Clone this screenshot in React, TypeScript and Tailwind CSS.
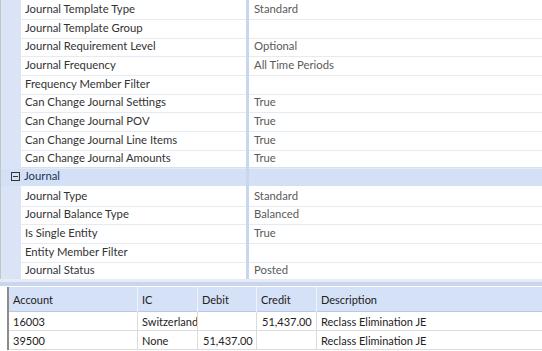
const props: { label: string; value?: string }[] = [
  { label: 'Journal Template Type', value: 'Standard' },
  { label: 'Journal Template Group' },
  { label: 'Journal Requirement Level', value: 'Optional' },
  { label: 'Journal Frequency', value: 'All Time Periods' },
  { label: 'Frequency Member Filter' },
  { label: 'Can Change Journal Settings', value: 'True' },
  { label: 'Can Change Journal POV', value: 'True' },
  { label: 'Can Change Journal Line Items', value: 'True' },
  { label: 'Can Change Journal Amounts', value: 'True' },
];

const journalProps: { label: string; value?: string }[] = [
  { label: 'Journal Type', value: 'Standard' },
  { label: 'Journal Balance Type', value: 'Balanced' },
  { label: 'Is Single Entity', value: 'True' },
  { label: 'Entity Member Filter' },
  { label: 'Journal Status', value: 'Posted' },
];

const lines = [
  { account: '16003', ic: 'SwitzerlandElim', debit: '', credit: '51,437.00', desc: 'Reclass Elimination JE' },
  { account: '39500', ic: 'None', debit: '51,437.00', credit: '', desc: 'Reclass Elimination JE' },
];

function PropRow({ label, value }: { label: string; value?: string }) {
    return (
        <div className="grid grid-cols-[20px_225px_3px_1fr] h-[18.67px]">
            <div className="bg-[#dae4f6]" />
            <div className="border-b border-[#e6ebf2] pl-[4px] text-[#333] leading-[20px] whitespace-nowrap">{label}</div>
            <div className="bg-[#c8d6f0]" />
            <div className="border-b border-[#e6ebf2] pl-[5px] text-[#5a5a5a] leading-[20px] whitespace-nowrap">{value}</div>
        </div>
    );
}

export default function App() {
    return (
        <div
            className="w-[542px] h-[351px] overflow-hidden bg-white text-[11.3px]"
            style={{ fontFamily: 'Lato, "Open Sans", sans-serif' }}
        >
            <div className="-mt-[1px] border-l border-[#c4c4c4]">
                {props.map(p => (
                    <PropRow key={p.label} {...p} />
                ))}
                <div className="grid grid-cols-[245px_3px_1fr] h-[18.67px] bg-[#d3e0f6]">
                    <div className="flex items-center gap-[4px] pl-[10px] pt-[1px] text-[#1d3557]">
                        <span className="w-[9px] h-[9px] border border-[#333] flex items-center justify-center">
                            <span className="w-[5px] h-[1px] bg-[#333]" />
                        </span>
                        Journal
                    </div>
                    <div className="bg-[#c8d6f0]" />
                    <div />
                </div>
                {journalProps.map(p => (
                    <PropRow key={p.label} {...p} />
                ))}
            </div>

            <div className="h-[8px] flex flex-col">
                <div className="h-[3px] bg-[#e6ebf4]" />
                <div className="h-[4px] bg-[#c9d6ee]" />
                <div className="h-[1px] bg-white" />
            </div>

            <div className="ml-[7px] border-l-2 border-[#8c8c8c] text-[#222] text-[11px]">
                <div className="grid grid-cols-[128px_60px_59px_60px_1fr] h-[25px] bg-[#d5e1f6] border-b border-[#b9c8e4]">
                    {['Account', 'IC', 'Debit', 'Credit', 'Description'].map((h, i) => (
                        <div
                            key={h}
                            className={`leading-[25px] pl-[4px] ${i > 0 ? 'border-l border-[#eef2fa]' : ''}`}
                        >
                            {h}
                        </div>
                    ))}
                </div>
                {lines.map(l => (
                    <div
                        key={l.account}
                        className="grid grid-cols-[128px_60px_59px_60px_1fr] h-[19px] border-b border-[#dcdcdc]"
                    >
                        <div className="leading-[19px] pl-[4px] whitespace-nowrap overflow-hidden">{l.account}</div>
                        <div className="leading-[19px] pl-[4px] border-l border-[#dcdcdc] whitespace-nowrap overflow-hidden">{l.ic}</div>
                        <div className="leading-[19px] pl-[5px] border-l border-[#dcdcdc] whitespace-nowrap overflow-hidden">{l.debit}</div>
                        <div className="leading-[19px] pl-[5px] border-l border-[#dcdcdc] whitespace-nowrap overflow-hidden">{l.credit}</div>
                        <div className="leading-[19px] pl-[4px] border-l border-[#dcdcdc] whitespace-nowrap overflow-hidden">{l.desc}</div>
                    </div>
                ))}
            </div>
        </div>
    );
}
